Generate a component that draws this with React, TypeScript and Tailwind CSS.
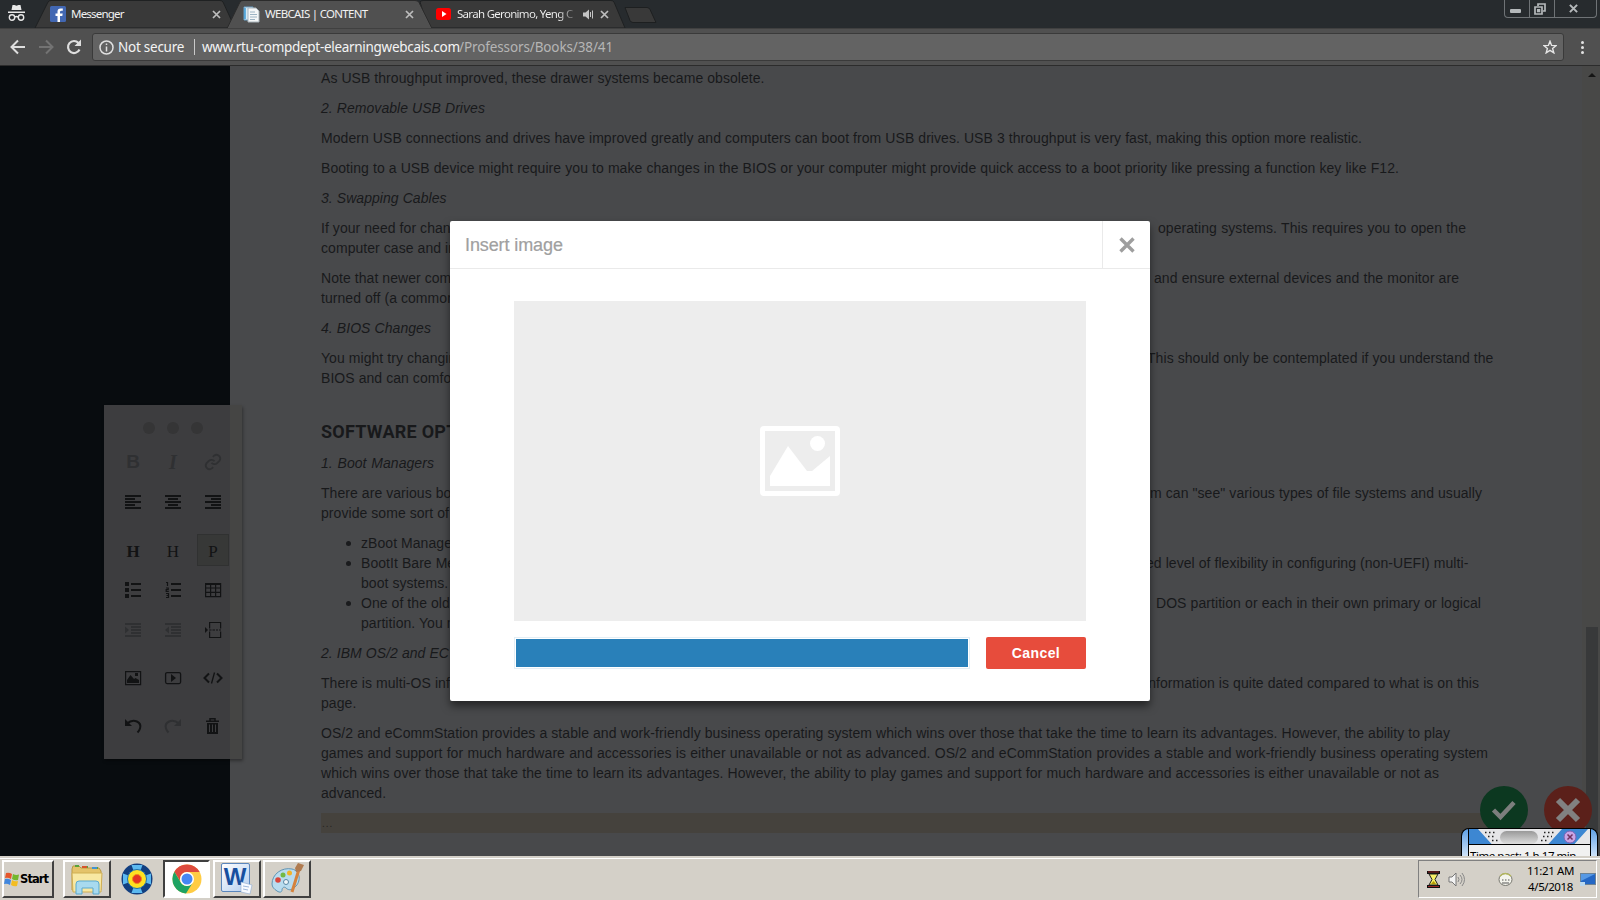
import type { ReactNode } from "react";

const ARIAL = "font-['Liberation_Sans',Arial,sans-serif]";
const TAHOMA = "font-['Noto_Sans',Tahoma,sans-serif]";

/* A line of the document: `w` is the justified width of the left run. */
function Line({ children, w = "", right, rw = "", italic = false }: { children: ReactNode; w?: string; right?: string; rw?: string; italic?: boolean }) {
  return (
    <div className={`flex h-5 w-[1279px] items-center whitespace-nowrap leading-5 ${italic ? "italic" : ""}`}>
      <span className={`block shrink-0 ${w ? "[text-align-last:justify]" : ""} ${w}`}>{children}</span>
      {right && <span className={`ml-auto ${rw}`}>{right}</span>}
    </div>
  );
}

function Bullet({ children, right, rw }: { children: ReactNode; right?: string; rw?: string }) {
  return (
    <div className="flex h-5">
      <div className="flex w-10 items-center pl-[25px]"><i className="mt-px size-[5px] rounded-full bg-[#1a1b1d]" /></div>
      <div className="flex w-[1239px] whitespace-nowrap leading-5">
        <span>{children}</span>
        {right && <span className={`ml-auto ${rw}`}>{right}</span>}
      </div>
    </div>
  );
}

function Document() {
  return (
    <div className={`flex w-[1370px] flex-col gap-2.5 pl-[91px] pt-0.5 text-[14px] tracking-[0.06px] text-[#18191b] ${ARIAL}`}>
      <Line w="w-[442px]">As USB throughput improved, these drawer systems became obsolete.</Line>
      <Line italic w="w-[161px]">2. Removable USB Drives</Line>
      <Line w="w-[1041px]">Modern USB connections and drives have improved greatly and computers can boot from USB drives. USB 3 throughput is very fast, making this option more realistic.</Line>
      <Line w="w-[1078px]">Booting to a USB device might require you to make changes in the BIOS or your computer might provide quick access to a boot priority like pressing a function key like F12.</Line>
      <Line italic w="w-[125px]">3. Swapping Cables</Line>
      <div>
        <Line right="operating systems. This requires you to open the" rw="mr-[134px] w-[308px] [text-align-last:justify]">If your need for chan</Line>
        <Line>computer case and in</Line>
      </div>
      <div>
        <Line right="and ensure external devices and the monitor are" rw="mr-[141px] w-[305px] [text-align-last:justify]">Note that newer comp</Line>
        <Line>turned off (a common</Line>
      </div>
      <Line italic w="w-[110px]">4. BIOS Changes</Line>
      <div>
        <Line right="This should only be contemplated if you understand the" rw="mr-[107px] w-[346px] [text-align-last:justify]">You might try changin</Line>
        <Line>BIOS and can comfor</Line>
      </div>
      <div className="mt-6 h-5 w-32 overflow-visible whitespace-nowrap font-['Roboto',sans-serif] text-[18px] font-bold leading-5 tracking-[0.25px]">SOFTWARE OPT</div>
      <div className="mt-px"><Line italic w="w-[113px]">1. Boot Managers</Line></div>
      <div>
        <Line right={'m can "see" various types of file systems and usually'} rw="mr-[118px] w-[332px] [text-align-last:justify]">There are various boo</Line>
        <Line>provide some sort of</Line>
      </div>
      <div>
        <Bullet>zBoot Manager</Bullet>
        <Bullet right="ed level of flexibility in configuring (non-UEFI) multi-" rw="mr-[135px] w-[319px] [text-align-last:justify]">BootIt Bare Me</Bullet>
        <div className="h-5 pl-10 leading-5">boot systems.</div>
        <Bullet right="DOS partition or each in their own primary or logical" rw="mr-[119px] w-[325px] [text-align-last:justify]">One of the olde</Bullet>
        <div className="h-5 pl-10 leading-5">partition. You m</div>
      </div>
      <Line italic w="w-[128px]">2. IBM OS/2 and EC</Line>
      <div>
        <Line right="information is quite dated compared to what is on this" rw="mr-[122px] w-[333px] [text-align-last:justify]">There is multi-OS info</Line>
        <Line>page.</Line>
      </div>
      <div>
        <Line w="w-[1129px]">OS/2 and eCommStation provides a stable and work-friendly business operating system which wins over those that take the time to learn its advantages. However, the ability to play</Line>
        <Line w="w-[1167px]">games and support for much hardware and accessories is either unavailable or not as advanced. OS/2 and eCommStation provides a stable and work-friendly business operating system</Line>
        <Line w="w-[1118px]">which wins over those that take the time to learn its advantages. However, the ability to play games and support for much hardware and accessories is either unavailable or not as</Line>
        <Line>advanced.</Line>
      </div>
      <div className="h-5 w-[1175px] bg-[#45423d] pl-px text-[10px] leading-[22px] tracking-[1px] text-[#25231f]">...</div>
    </div>
  );
}

function Tool({ children, dim = false, active = false }: { children: ReactNode; dim?: boolean; active?: boolean }) {
  return (
    <div className={`flex size-8 items-center justify-center ${dim ? "text-[#2f3032]" : "text-[#121314]"} ${active ? "border border-[#303131] bg-[#373837]" : ""}`}>
      {children}
    </div>
  );
}

function Pic({ d, stroke = 2, children }: { d?: string; stroke?: number; children?: ReactNode }) {
  return (
    <svg width="20" height="20" viewBox="0 0 20 20" fill="none" stroke="currentColor" strokeWidth={stroke}>
      {d && <path d={d} />}
      {children}
    </svg>
  );
}

function EditorToolbar() {
  const serif = "font-['Liberation_Serif',serif]";
  return (
    <div className="absolute left-[104px] top-[339px] h-[354px] w-[138px] bg-[linear-gradient(90deg,#3d3d3f_126px,#454544_126px)] shadow-[1px_2px_3px_rgba(0,0,0,0.35)]">
      <div className="ml-[39px] flex gap-3 pt-[17px]">
        <i className="size-3 rounded-full bg-[#353536]" /><i className="size-3 rounded-full bg-[#353536]" /><i className="size-3 rounded-full bg-[#353536]" />
      </div>
      <div className="ml-[13px] mt-[12px] grid w-[112px] grid-cols-3 gap-x-2">
        <Tool dim><b className="font-['Liberation_Sans',sans-serif] text-[19px]">B</b></Tool>
        <Tool dim><b className={`${serif} text-[20px] italic`}>I</b></Tool>
        <Tool dim>
          <svg width="18" height="18" viewBox="0 0 24 24" fill="none" stroke="currentColor" strokeWidth="2.4"><path d="M10 13a5 5 0 0 0 7.5.5l3-3a5 5 0 0 0-7-7l-1.7 1.7M14 11a5 5 0 0 0-7.5-.5l-3 3a5 5 0 0 0 7 7l1.7-1.7" /></svg>
        </Tool>
      </div>
      <div className="ml-[13px] mt-2 grid w-[112px] grid-cols-3 gap-x-2">
        <Tool><Pic d="M2 4h16M2 7h10M2 10h16M2 13h10M2 16h16" /></Tool>
        <Tool><Pic d="M2 4h16M5 7h10M2 10h16M5 13h10M2 16h16" /></Tool>
        <Tool><Pic d="M2 4h16M8 7h10M2 10h16M8 13h10M2 16h16" /></Tool>
      </div>
      <div className="ml-[13px] mt-4 grid w-[112px] grid-cols-3 gap-x-2">
        <Tool><b className={`${serif} pt-1 text-[17px]`}>H</b></Tool>
        <Tool><span className={`${serif} pt-1 text-[17px]`}>H</span></Tool>
        <Tool active><span className={`${serif} pt-1 text-[17px]`}>P</span></Tool>
      </div>
      <div className="ml-[13px] mt-2 grid w-[112px] grid-cols-3 gap-x-2">
        <Tool><Pic d="M8 4h10M8 10h10M8 16h10"><path strokeWidth="4" d="M2 4h4M2 10h4M2 16h4" /></Pic></Tool>
        <Tool><Pic d="M8 4h10M8 10h10M8 16h10"><path strokeWidth="1.2" d="M3 2.5h1.5V6M3 8h2.2v1.7H3.2v1.8h2.6M3 13.5h2.5v4H3M3.5 15.5h2" /></Pic></Tool>
        <Tool><Pic stroke={1.2} d="M2.6 3.6h15v13h-15zM2.6 8h15M2.6 12.3h15M7.6 4v12.6M12.6 4v12.6"><path strokeWidth="2" d="M2 4h16" /></Pic></Tool>
      </div>
      <div className="ml-[13px] mt-2 grid w-[112px] grid-cols-3 gap-x-2">
        <Tool dim><Pic d="M2 4h16M8 7h10M8 10h10M8 13h10M2 16h16"><path d="M2 6.5l4 3.500-4 3.500z" fill="currentColor" stroke="none" /></Pic></Tool>
        <Tool dim><Pic d="M2 4h16M8 7h10M8 10h10M8 13h10M2 16h16"><path d="M6 6.5l-4 3.500 4 3.500z" fill="currentColor" stroke="none" /></Pic></Tool>
        <Tool><Pic stroke={1.2} d="M6.6 8.500v-6h11v6M6.6 11.500v6h11v-6M6 10h2.500M9.500 10h2.500M13 10h2M16 10h2"><path d="M2 7l3 3-3 3z" fill="currentColor" stroke="none" /></Pic></Tool>
      </div>
      <div className="ml-[13px] mt-4 grid w-[112px] grid-cols-3 gap-x-2">
        <Tool><Pic stroke={1.2} d="M2.6 3.6h15v13h-15z"><path d="M4 15v-3l3.500-5 3.500 4 1.500-1L16 12v3z" fill="currentColor" stroke="none" /><rect x="12" y="5" width="3" height="3" fill="currentColor" stroke="none" /></Pic></Tool>
        <Tool><Pic stroke={1.3}><rect x="2.6" y="4.6" width="15" height="11" rx="1.5" /><path d="M8 6l5 4-5 4z" fill="currentColor" stroke="none" /></Pic></Tool>
        <Tool><Pic d="M6 5.500L1.500 10 6 14.500M14 5.500l4.500 4.500-4.500 4.500"><path strokeWidth="1.3" d="M11.500 4.500l-3 11" /></Pic></Tool>
      </div>
      <div className="ml-[13px] mt-4 grid w-[112px] grid-cols-3 gap-x-2">
        <Tool><Pic d="M4 7.500c7-6 15-1 13 5-.5 2-1.500 3-2.500 4"><path d="M2 3v7h7z" fill="currentColor" stroke="none" /></Pic></Tool>
        <Tool dim><Pic d="M16 7.500c-7-6-15-1-13 5 .5 2 1.500 3 2.500 4"><path d="M18 3v7h-7z" fill="currentColor" stroke="none" /></Pic></Tool>
        <Tool><Pic stroke={1.5}><path d="M3 5.200h13M7 4.500V2.800h5v1.700" /><path d="M4 7h11v11H4z" fill="currentColor" stroke="none" /><path d="M6.500 8.500v7.500M9.500 8.500v7.500M12.500 8.500v7.500" stroke="#3d3d3f" strokeWidth="1" /></Pic></Tool>
      </div>
    </div>
  );
}

function Modal() {
  return (
    <div className={`absolute left-[450px] top-[155px] flex h-[480px] w-[700px] flex-col rounded-[2px] bg-white shadow-[0_5px_9px_rgba(0,0,0,0.5)] ${ARIAL}`}>
      <div className="flex h-12 border-b border-[#eaeaea]">
        <div className="flex-1 pl-[15px] text-[18px] leading-[49px] text-[#a0a0a0] [-webkit-text-stroke:0.2px_#a0a0a0]"><span className="block w-[97px] whitespace-nowrap [text-align-last:justify] tracking-[-0.1px]">Insert image</span></div>
        <div className="flex w-12 items-center justify-center border-l border-[#eaeaea]">
          <svg width="16" height="16" viewBox="0 0 16 16" stroke="#9e9e9e" strokeWidth="3.400"><path d="M1.500 1.500l13 13M14.500 1.500l-13 13" /></svg>
        </div>
      </div>
      <div className="mx-16 mt-8 flex h-80 items-center justify-center bg-[#ededed]">
        <svg width="80" height="70" viewBox="0 0 80 70" fill="#fff">
          <path fillRule="evenodd" d="M4 0h72a4 4 0 0 1 4 4v62a4 4 0 0 1-4 4H4a4 4 0 0 1-4-4V4a4 4 0 0 1 4-4zM5 5v60h70V5z" />
          <circle cx="57.500" cy="17.500" r="7.500" /><path d="M10 60V50l18-30 19 25h5l18-15v30z" />
        </svg>
      </div>
      <div className="mx-16 mt-4 flex h-8 justify-between">
        <div className="w-[456px] border border-[#e3eef5] p-px"><div className="h-full bg-[#2980b9]" /></div>
        <div className="w-[100px] rounded-[2px] bg-[#e74c3c] text-center text-[14px] font-bold leading-8 tracking-[0.4px] text-white">Cancel</div>
      </div>
    </div>
  );
}

function TimerWidget() {
  return (
    <div className="absolute left-[1461px] top-[762px] h-7 w-[137px] overflow-hidden rounded-t-lg border border-b-0 border-black bg-gradient-to-b from-[#5da0e6] to-[#cfe3f8]">
      <div className="ml-1.5 flex h-full w-[123px] flex-col border-x border-black bg-white">
        <svg width="121" height="16" viewBox="0 0 121 16" className="shrink-0">
          <defs><linearGradient id="pill" x1="0" y1="0" x2="0" y2="1"><stop stopColor="#999" /><stop offset="1" stopColor="#ddd" /></linearGradient></defs>
          <rect width="121" height="16" fill="#e6e6e8" />
          <path d="M0 0h9l14 15.500H0zM93 0h26l-14 15.500H79z" fill="#3d87d2" />
          <rect x="31" y="2" width="38" height="13" rx="6.500" fill="url(#pill)" />
          <path d="M16 3.500h11M19 7.500h8M23 11.500h7M75 3.500h11M74 7.500h9M72 11.500h7" stroke="#222" strokeWidth="1.500" strokeDasharray="1.500 2.500" />
          <circle cx="101" cy="8" r="6" fill="#c9a5e4" stroke="#7b62b8" /><path d="M98.500 5.500l5 5M103.500 5.500l-5 5" stroke="#713261" strokeWidth="1.500" />
          <path d="M0 15.500h121" stroke="#000" />
        </svg>
        <div className={`h-3 overflow-hidden whitespace-nowrap bg-[#f1f1f1] pl-px text-[11.500px] leading-[22px] text-black ${TAHOMA}`}><span className="block w-[102px] tracking-[-0.45px] [text-align-last:justify]">Time past: 1 h 17 min</span></div>
      </div>
    </div>
  );
}

function Page() {
  return (
    <div className="relative flex h-[790px] overflow-hidden bg-[#48494b]">
      <div className="w-[230px] shrink-0 bg-[#080c0f]" />
      <div className="min-w-0 flex-1 overflow-hidden"><Document /></div>
      <div className="absolute right-0 top-0 flex h-full w-[18px] flex-col bg-[#484847]">
        <svg className="ml-[5px] mt-1.5" width="10" height="5"><path d="M1 5l4-4 4 4z" fill="#151515" /></svg>
        <div className="ml-1 mt-[550px] w-3 flex-1 bg-[#38393a]" />
      </div>
      <EditorToolbar />
      <div className="absolute left-[1480px] top-[720px] flex gap-4">
        <div className="flex size-12 items-center justify-center rounded-full bg-[#0c3820]">
          <svg width="26" height="24" viewBox="0 0 26 24" fill="none" stroke="#7c7e7d" strokeWidth="4.500"><path d="M2.500 12l7 7L23 4.500" /></svg>
        </div>
        <div className="flex size-12 items-center justify-center rounded-full bg-[#5b201a]">
          <svg width="26" height="26" viewBox="0 0 26 26" stroke="#818181" strokeWidth="6"><path d="M3 3l20 20M23 3L3 23" /></svg>
        </div>
      </div>
      <Modal />
      <TimerWidget />
    </div>
  );
}

function TabClose() {
  return <svg width="9" height="9" viewBox="0 0 9 9" stroke="#bdbdbd" strokeWidth="1.700"><path d="M1 1l7 7M8 1L1 8" /></svg>;
}

function TabStrip() {
  return (
    <div className={`relative flex h-7 bg-[#272b2e] text-[12px] leading-7 text-[#f2f2f2] ${TAHOMA}`}>
      <svg className="absolute left-0 top-0" width="700" height="28">
        <path d="M35 28L48 2q1-1.500 3-1.500h169q2 0 3 1.500L235 28z" fill="#393939" stroke="#1f2122" />
        <path d="M428 28L420 2q1-1.500 3-1.500h188q2 0 3 1.500L625 28z" fill="#393939" stroke="#1f2122" />
        <path d="M227 28.500L240 2q1-1.500 3-1.500h172q3 0 4 2L432 28.500z" fill="#505050" stroke="#2b2b2b" />
        <path d="M625 7.500h22q2 0 3 2l6 13h-23q-2 0-3-2z" fill="#393939" stroke="#1d1f20" />
      </svg>
      <svg className="relative ml-2 mt-1 shrink-0" width="17" height="18" viewBox="0 0 17 18" fill="#e8e8e8"><path d="M4.500 1h2l2 .7 2-.7h2l1 5h-10zM0 7.500h17V9H0z" /><g fill="none" stroke="#e8e8e8" strokeWidth="1.400"><circle cx="4" cy="13.500" r="2.700" /><circle cx="13" cy="13.500" r="2.700" /><path d="M6.500 13q2-1 4 0" /></g></svg>
      <div className="relative flex w-[173px] items-center pl-[25px]">
        <svg width="16" height="16" viewBox="0 0 16 16"><rect width="16" height="16" rx="1.500" fill="#4267b2" /><path d="M10 16V10h2.300l.4-2.500H10V6q0-1.300 1.400-1.300h1.400V2.500h-2.200Q7.500 2.500 7.500 5.500v2H5.500V10h2v6z" fill="#fff" /></svg>
        <span className="ml-[5px] w-[53px] whitespace-nowrap text-[11.500px] tracking-[-0.800px]">Messenger</span>
      </div>
      <div className="relative flex w-[30px] items-center"><span className="ml-[14px]"><TabClose /></span></div>
      <div className="relative flex w-[191px] items-center pl-[15px]">
        <svg width="17" height="17" viewBox="0 0 17 17"><path d="M1 1h9v13H1z" fill="#d6e9f5" stroke="#6b9fc4" /><path d="M5 2h8l3 3v11H5z" fill="#f5f7f8" stroke="#a9b4bb" /><path d="M7 6h5M7 8.500h7M7 11h7M7 13.500h5" stroke="#9db4c4" /><path d="M2 2v11" stroke="#3e9bd4" strokeWidth="1.500" /></svg>
        <span className="ml-[5px] w-[104px] whitespace-nowrap text-[11.500px] tracking-[-0.700px]">WEBCAIS | CONTENT</span>
        <span className="ml-[36px]"><TabClose /></span>
      </div>
      <div className="relative flex w-[195px] items-center pl-[17px]">
        <svg width="15" height="14" viewBox="0 0 15 14"><rect y="1" width="15" height="12" rx="2.500" fill="#f00" /><path d="M6 4l4.500 3L6 10z" fill="#fff" /></svg>
        <span className="ml-[6px] w-[119px] whitespace-nowrap bg-gradient-to-r from-[#f2f2f2] from-85% to-[#555] bg-clip-text text-[11.500px] tracking-[-0.700px] text-transparent">Sarah Geronimo, Yeng C</span>
        <svg className="ml-[7px]" width="11" height="11" viewBox="0 0 11 11" fill="#c4c4c4"><path d="M0 3.500h2.500L6 .5v10L2.500 7.500H0z" /><path d="M7.500 3v5M9.500 1.500v8" stroke="#c4c4c4" /></svg>
        <span className="ml-[6px]"><TabClose /></span>
      </div>
      <div className="absolute left-[1504px] top-0 flex h-[18px] w-[93px] rounded-b-[4px] border border-t-0 border-[#6f7376] text-[#bfc2c4]">
        <div className="flex w-[25px] items-end justify-center border-r border-[#6f7376] pb-1"><i className="mr-1 h-[4px] w-[11px] rounded-[1px] bg-[#b5b9bb]" /></div>
        <div className="flex w-[25px] items-center justify-center border-r border-[#6f7376]"><svg className="mr-1" width="12" height="12" viewBox="0 0 12 12" fill="none" stroke="#b5b9bb" strokeWidth="1.700"><path d="M4 3V1h7v7H9" /><path d="M1 4h7v7H1zM3.800 6.800h1.600v1.600H3.800z" /></svg></div>
        <div className="flex flex-1 items-center justify-center"><svg className="mr-1" width="9" height="9" viewBox="0 0 10 10" stroke="#b5b9bb" strokeWidth="2.200"><path d="M1 1l8 8M9 1L1 9" /></svg></div>
      </div>
    </div>
  );
}

function AddressBar() {
  return (
    <div className={`flex h-[38px] items-center border-y border-b-[#2c2c2c] border-t-[#404040] bg-[#505050] text-[14px] text-[#f4f4f4] ${TAHOMA}`}>
      <svg className="ml-[10px]" width="16" height="16" viewBox="0 0 16 16" fill="none" stroke="#dedede" strokeWidth="2"><path d="M15 8H2M8 1.500L1.500 8 8 14.500" /></svg>
      <svg className="ml-[12px]" width="16" height="16" viewBox="0 0 16 16" fill="none" stroke="#737373" strokeWidth="2"><path d="M1 8h13M8 1.500L14.500 8 8 14.500" /></svg>
      <svg className="ml-[12px]" width="16" height="16" viewBox="0 0 16 16" fill="none" stroke="#dedede" strokeWidth="2.200"><path d="M13.500 10.500A6 6 0 1 1 12.500 4" /><path d="M15 .5v6.500H8.500z" fill="#dedede" stroke="none" /></svg>
      <div className="ml-[10px] flex h-7 w-[1472px] items-center whitespace-nowrap rounded-[3px] border border-[#3a3a3a] bg-[#636363]">
        <svg className="ml-[6px]" width="15" height="15" viewBox="0 0 15 15" fill="none" stroke="#e0e0e0" strokeWidth="1.500"><circle cx="7.500" cy="7.500" r="6.500" /><path d="M7.500 6.500v5M7.500 3.500v1.600" /></svg>
        <span className="ml-[4px] w-[67px] text-[13.500px] tracking-[-0.250px]">Not secure</span>
        <i className="ml-[9px] mr-[7px] h-4 w-px bg-[#c9c9c9]" />
        <span className="w-[257px] text-[13.500px] tracking-[-0.300px]">www.rtu-compdept-elearningwebcais.com</span>
        <span className="text-[13.500px] tracking-[-0.120px] text-[#b5b5b5]">/Professors/Books/38/41</span>
        <svg className="ml-auto mr-[6px]" width="14" height="14" viewBox="0 0 14 14" fill="none" stroke="#e6e6e6" strokeWidth="1.400"><path d="M7 1.200l1.600 4.200 4.500.2-3.500 2.800 1.200 4.400L7 10.300l-3.800 2.500 1.200-4.400L.9 5.600l4.500-.2z" /></svg>
      </div>
      <div className="ml-[17px] flex flex-col gap-[2px]"><i className="size-[3px] rounded-full bg-[#e2e2e2]" /><i className="size-[3px] rounded-full bg-[#e2e2e2]" /><i className="size-[3px] rounded-full bg-[#e2e2e2]" /></div>
    </div>
  );
}

const RAISED = "border-2 border-b-[#404040] border-l-white border-r-[#404040] border-t-white bg-[#d4d0c8]";

function Taskbar() {
  return (
    <div className="flex h-11 border-t-2 border-[#d4d0c8] bg-[#d4d0c8] shadow-[inset_0_1px_0_#fff]">
      <div className={`ml-[2px] mt-[2px] flex h-[38px] w-[52px] items-center ${RAISED}`}>
        <svg width="16" height="15" viewBox="0 0 16 15"><path d="M2 1q3-1 6 1L7 7Q4 5 1 6z" fill="#e5562b" /><path d="M9 2q3 1.500 6 .5L14 8q-3 1-6-1z" fill="#72b72c" /><path d="M1 7q3-1 6 1l-1 5q-3-2-6-1z" fill="#4287dd" /><path d="M8 8q3 2 6 1l-1 5q-3 1-6-1z" fill="#f3bd21" /></svg>
        <b className="font-['DejaVu_Sans',sans-serif] text-[11.500px] leading-4 tracking-[-0.900px] text-black">Start</b>
      </div>
      <div className={`ml-[9px] mt-[2px] flex h-[38px] w-[48px] items-center justify-center ${RAISED}`}>
        <svg width="34" height="32" viewBox="0 0 34 32"><path d="M2 6l1-3h6l2 2h18l2 3v19H2z" fill="#e4c36b" stroke="#b99943" /><path d="M5 3h4M13 4h5M22 5h6" stroke="#58a33a" strokeWidth="2" /><path d="M12 4h5" stroke="#d6552b" strokeWidth="2" /><path d="M22 5h5" stroke="#4293d2" strokeWidth="2" /><path d="M2 10h30l-1 19H3z" fill="#f8e8a3" stroke="#d0af55" /><path d="M6 31V21q0-3 3-3h17q3 0 3 3v10h-6v-6H12v6z" fill="#a8daef" stroke="#5ba9cf" /></svg>
      </div>
      <svg className="ml-[10px] mt-[5px]" width="32" height="32" viewBox="0 0 32 32">
        <circle cx="16" cy="16" r="15.500" fill="#123f80" />
        <path d="M10.500 2h11L19 9h-6zM10.500 30h11L19 23h-6zM2 10.500v11L9 19v-6zM30 10.500v11L23 19v-6z" fill="#5cb9f0" />
        <circle cx="16" cy="16" r="9.500" fill="#ffe022" stroke="#1d6fae" /><circle cx="16" cy="16" r="4.500" fill="#e53423" stroke="#f08a1c" />
      </svg>
      <div className="ml-[10px] mt-[2px] flex h-[38px] w-[47px] items-center justify-center border-2 border-b-white border-l-[#404040] border-r-white border-t-[#404040] bg-white">
        <svg width="30" height="30" viewBox="0 0 30 30"><circle cx="15" cy="15" r="14.500" fill="#fc4" /><path d="M2.400 7.700A14.500 14.500 0 0 1 27.600 8H15a7 7 0 0 0-6.500 9.500z" fill="#dd4b3e" /><path d="M2.400 7.700A14.500 14.500 0 0 0 14 29.500l6.500-10.500a7 7 0 0 1-12-1z" fill="#1ea362" /><circle cx="15" cy="15" r="7" fill="#fff" /><circle cx="15" cy="15" r="5.500" fill="#4587f3" /></svg>
      </div>
      <div className={`ml-[3px] mt-[2px] flex h-[38px] w-[48px] items-center justify-center ${RAISED}`}>
        <div className="relative mb-1 mr-1 flex size-[29px] items-center justify-center rounded-[2px] border border-[#5a86bd] bg-gradient-to-br from-white to-[#b4cdee]">
          <b className="font-['Liberation_Sans',sans-serif] text-[24px] leading-6 text-[#174f9f]">W</b>
          <svg className="absolute -bottom-1 -right-1" width="13" height="14" viewBox="0 0 13 14"><path d="M1 1l11 3-2 9-9-2z" fill="#f7faff" stroke="#8eabd0" strokeWidth=".6" /><path d="M3 5l6 1M3 8l5 1" stroke="#9db7dc" /></svg>
        </div>
      </div>
      <div className={`ml-[2px] mt-[2px] flex h-[38px] w-[48px] items-center justify-center ${RAISED}`}>
        <svg width="34" height="32" viewBox="0 0 34 32"><path d="M2 21C2 11 12 4 22 6c9 2 9 13 3 18-4 4-7 3-9 1s-4 0-4 2-2 3-5 1-5-4-5-7z" fill="#b9dcef" stroke="#5f94b5" /><circle cx="8" cy="17" r="2.800" fill="#d9463c" /><circle cx="13" cy="12" r="2.500" fill="#73b944" /><circle cx="19.500" cy="10" r="2.500" fill="#f2b32b" /><circle cx="16" cy="19" r="2.500" fill="#f0f6fa" stroke="#5787a4" /><path d="M30 3L22 29" stroke="#d5823c" strokeWidth="3" /><path d="M25 5l3-5 6 2-3 6-5 1z" fill="#b07b50" /></svg>
      </div>
      <div className={`ml-auto mr-[3px] mt-[2px] flex h-[38px] w-[179px] items-center border border-b-white border-l-[#808080] border-r-white border-t-[#808080] text-black ${TAHOMA}`}>
        <svg className="ml-2" width="13" height="17" viewBox="0 0 13 17"><path d="M0 0h13v3H0zM0 14h13v3H0z" fill="#111" /><path d="M1 1h11M1 15.500h11" stroke="#9c2424" /><path d="M2 3h9l-3 5.500 3 5.500H2l3-5.500z" fill="#f7ef66" stroke="#222" /><path d="M4 13l2.500-3L9 13z" fill="#b59b00" /></svg>
        <svg className="ml-[8px]" width="17" height="17" viewBox="0 0 17 17" fill="none" stroke="#777"><path d="M1 6h3l4-4v13l-4-4H1z" fill="#f3f3f3" /><path d="M10 6q2 2.500 0 5M12 4q4 4.500 0 9M14 2q5 6.500 0 13" stroke="#888" /></svg>
        <svg className="ml-[33px]" width="15" height="15" viewBox="0 0 15 15"><ellipse cx="7.500" cy="7.500" rx="6.500" ry="6" fill="#f4f4ec" stroke="#77776f" /><path d="M2 4q5-5 11 0" stroke="#b4b85b" fill="none" strokeWidth="1.500" /><path d="M4 8h1.500M7 8h1.500M10 8h1.500M4 11h7" stroke="#555" /></svg>
        <div className="ml-[14px] w-[47px] text-center text-[11.500px] leading-4 tracking-[-0.400px]"><div className="whitespace-nowrap">11:21 AM</div><div>4/5/2018</div></div>
        <svg className="ml-[6px]" width="16" height="13" viewBox="0 0 16 13"><rect x=".5" y=".5" width="15" height="11" fill="#2467c4" stroke="#6b8296" /><path d="M1 1h14L1 8z" fill="#5799e4" /><rect y="9" width="5" height="4" fill="#b9d8ef" /></svg>
      </div>
    </div>
  );
}

export default function App() {
  return (
    <div className="flex h-[900px] w-[1600px] flex-col overflow-hidden bg-[#272b2e]">
      <TabStrip />
      <AddressBar />
      <Page />
      <Taskbar />
    </div>
  );
}
